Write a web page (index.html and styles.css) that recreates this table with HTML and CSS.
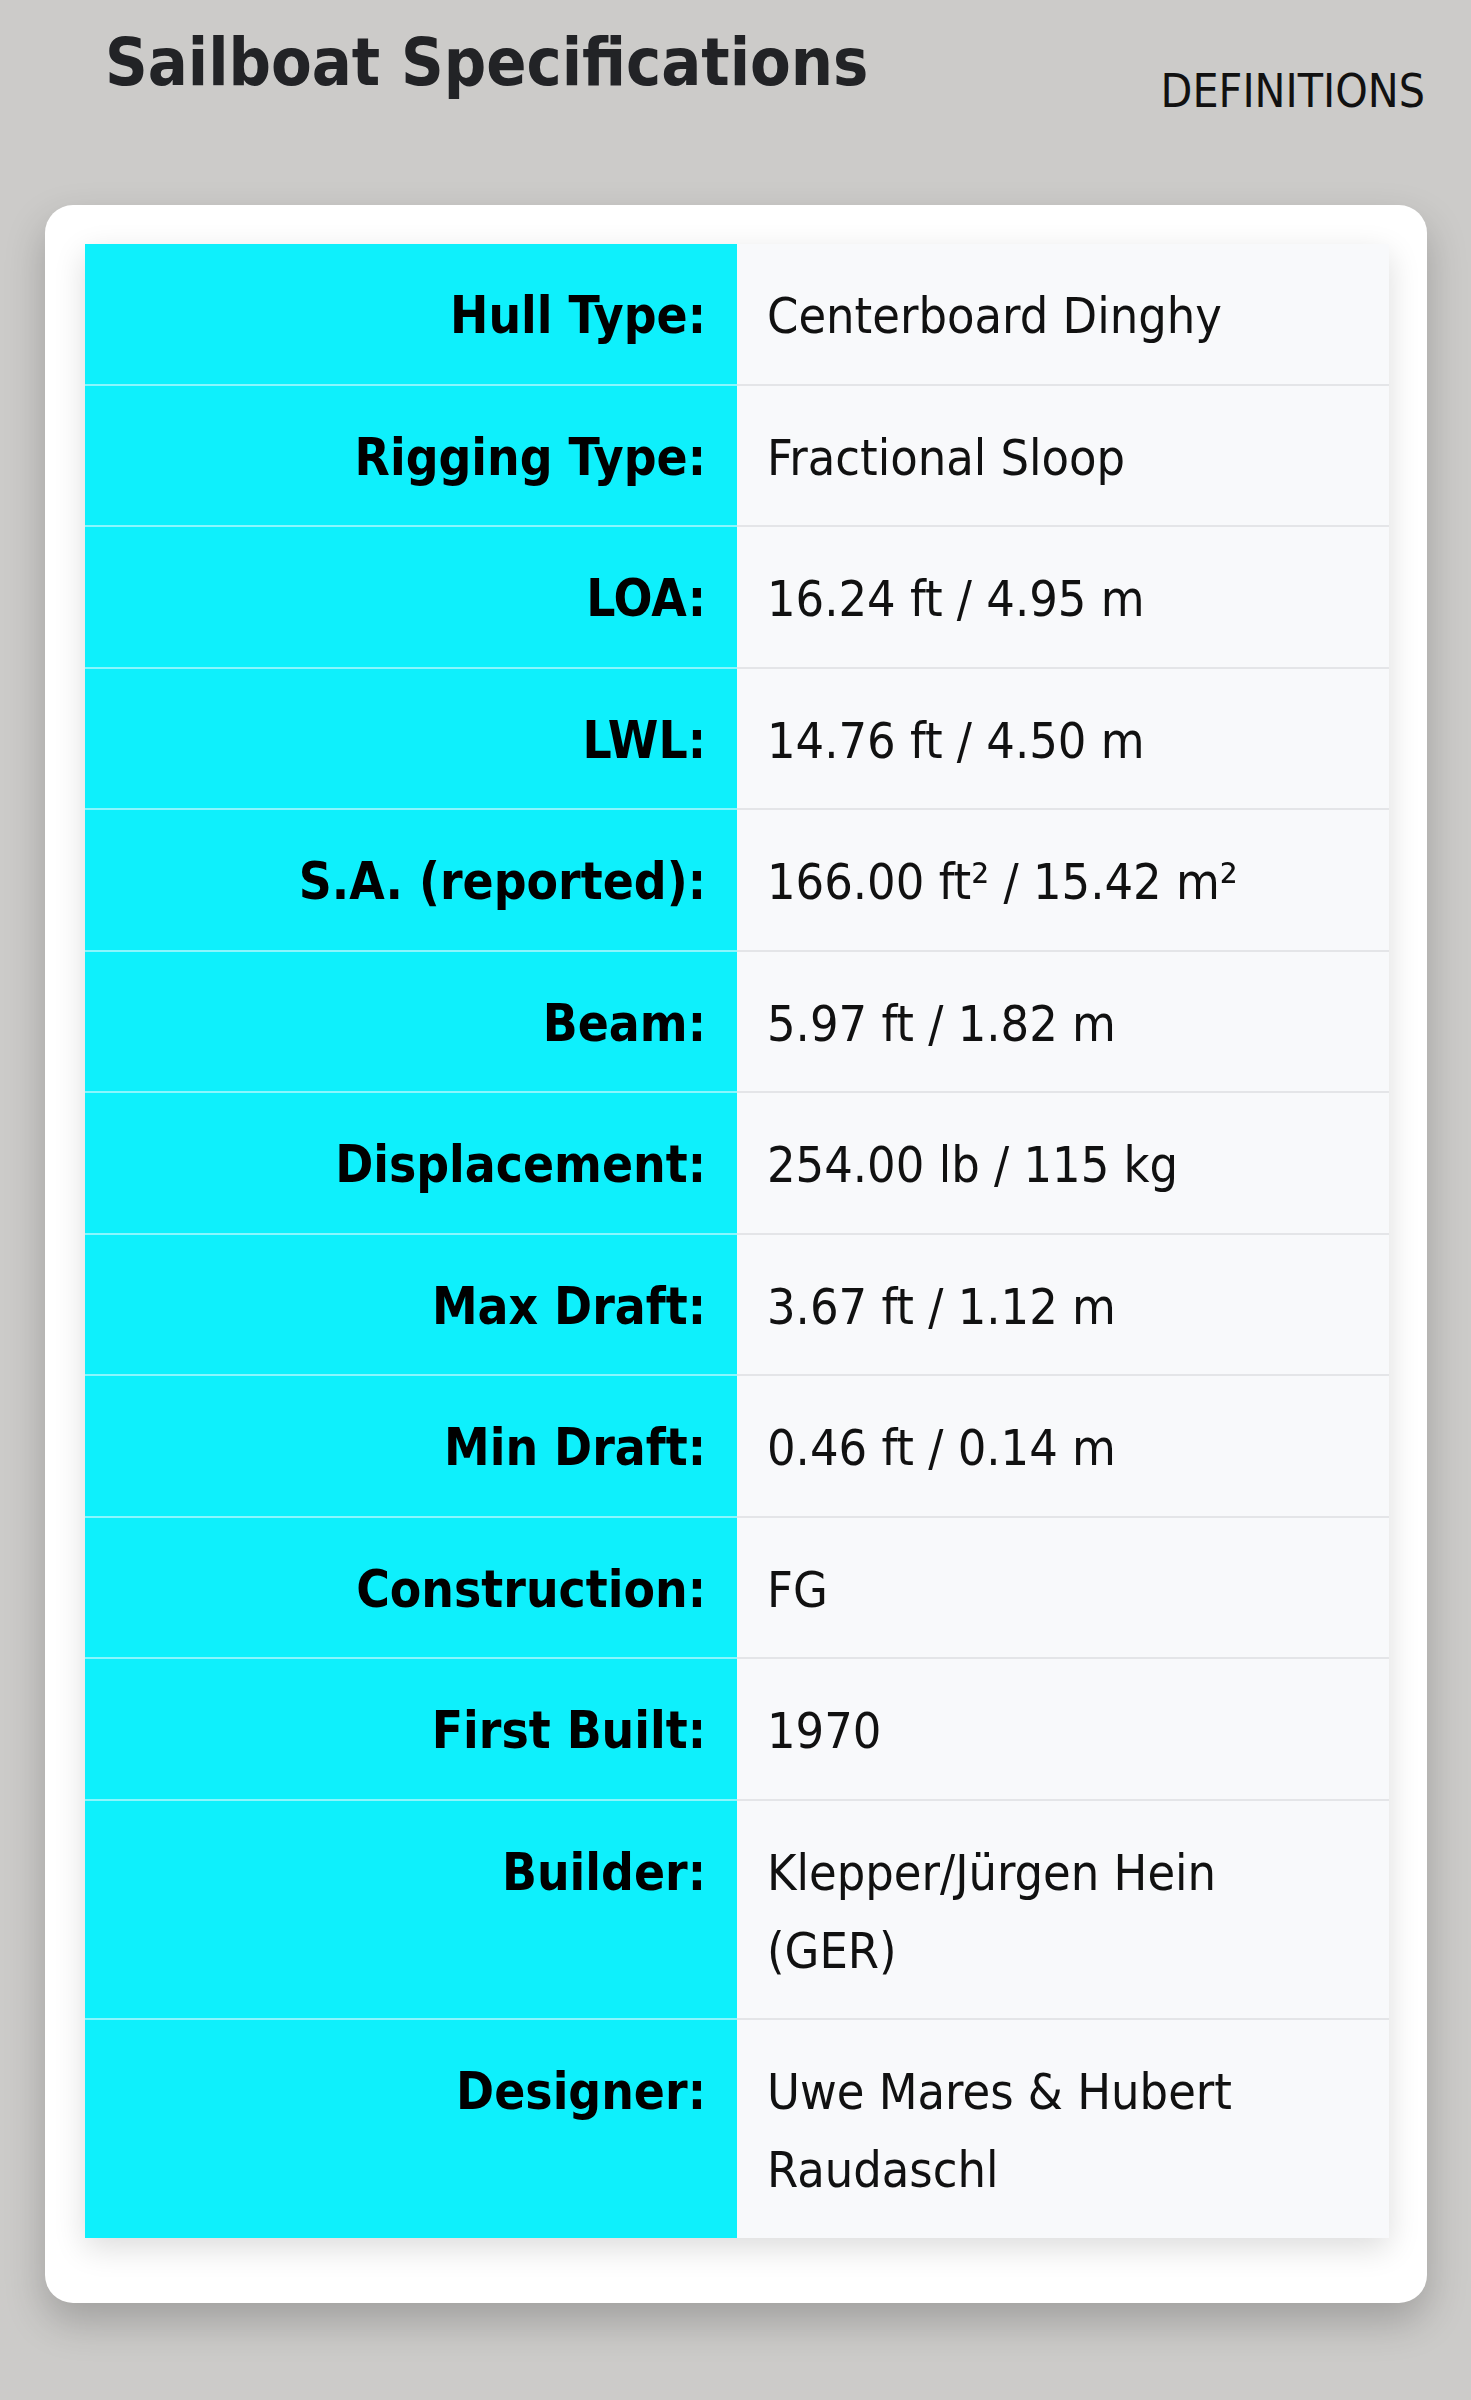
FILE: index.html
```html
<!DOCTYPE html>
<html lang="en">
<head>
  <meta charset="UTF-8" />
  <meta name="viewport" content="width=device-width, initial-scale=1.0"/>
  <link rel="stylesheet" href="styles.css">
</head>
<body>
  <header class="page-header">
    <h1 class="page-title">Sailboat Specifications</h1>
    <a class="definitions-link" href="#">DEFINITIONS</a>
  </header>

  <div class="spec-card">
    <table class="spec-table">
      <colgroup>
        <col class="label-col">
        <col class="value-col">
      </colgroup>
      <tr><th>Hull Type:</th><td>Centerboard Dinghy</td></tr>
      <tr><th>Rigging Type:</th><td>Fractional Sloop</td></tr>
      <tr><th>LOA:</th><td>16.24 ft / 4.95 m</td></tr>
      <tr><th>LWL:</th><td>14.76 ft / 4.50 m</td></tr>
      <tr><th>S.A. (reported):</th><td>166.00 ft² / 15.42 m²</td></tr>
      <tr><th>Beam:</th><td>5.97 ft / 1.82 m</td></tr>
      <tr><th>Displacement:</th><td>254.00 lb / 115 kg</td></tr>
      <tr><th>Max Draft:</th><td>3.67 ft / 1.12 m</td></tr>
      <tr><th>Min Draft:</th><td>0.46 ft / 0.14 m</td></tr>
      <tr><th>Construction:</th><td>FG</td></tr>
      <tr><th>First Built:</th><td>1970</td></tr>
      <tr><th>Builder:</th><td>Klepper/Jürgen Hein (GER)</td></tr>
      <tr><th>Designer:</th><td>Uwe Mares &amp; Hubert Raudaschl</td></tr>
    </table>
  </div>
</body>
</html>
```

FILE: styles.css
```css
body {
  margin: 0;
  padding: 0 0 98px;
  background-color: #cccbc9;
  font-family: "DejaVu Sans Condensed", "DejaVu Sans", sans-serif;
  font-stretch: condensed;
  color: #111;
}

.page-header {
  display: flex;
  justify-content: space-between;
  align-items: flex-start;
  padding: 23px 46px 0 105px;
  height: 116px;
  box-sizing: border-box;
}

.page-title {
  margin: 0;
  font-size: 66px;
  line-height: 1.2;
  font-weight: bold;
  color: #222326;
}

.definitions-link {
  margin-top: 41px;
  font-size: 46px;
  line-height: 1.2;
  color: #111;
  text-decoration: none;
}

.spec-card {
  margin: 89px 44px 0 45px;
  padding: 39px 38px 65px 40px;
  background-color: #fff;
  border-radius: 28px;
  box-shadow: 0 18px 40px rgba(0,0,0,0.22);
}

.spec-table {
  width: 100%;
  border-collapse: collapse;
  table-layout: fixed;
  box-shadow: 0 10px 30px rgba(0,0,0,0.14);
}

.label-col,
.value-col {
  width: 50%;
}

.spec-table th,
.spec-table td {
  font-size: 50px;
  line-height: 78px;
  padding: 33px 30px 28.5px 30px;
  vertical-align: top;
}

.spec-table th {
  text-align: right;
  padding-right: 31px;
  font-size: 51px;
  font-weight: bold;
  color: #000;
  background-color: #0ef0fc;
  border-bottom: 2px solid #8af6fd;
}

.spec-table td {
  text-align: left;
  background-color: #f8f9fb;
  border-bottom: 2px solid #e4e5e8;
}

.spec-table tr:last-child th,
.spec-table tr:last-child td {
  border-bottom: none;
}
```
